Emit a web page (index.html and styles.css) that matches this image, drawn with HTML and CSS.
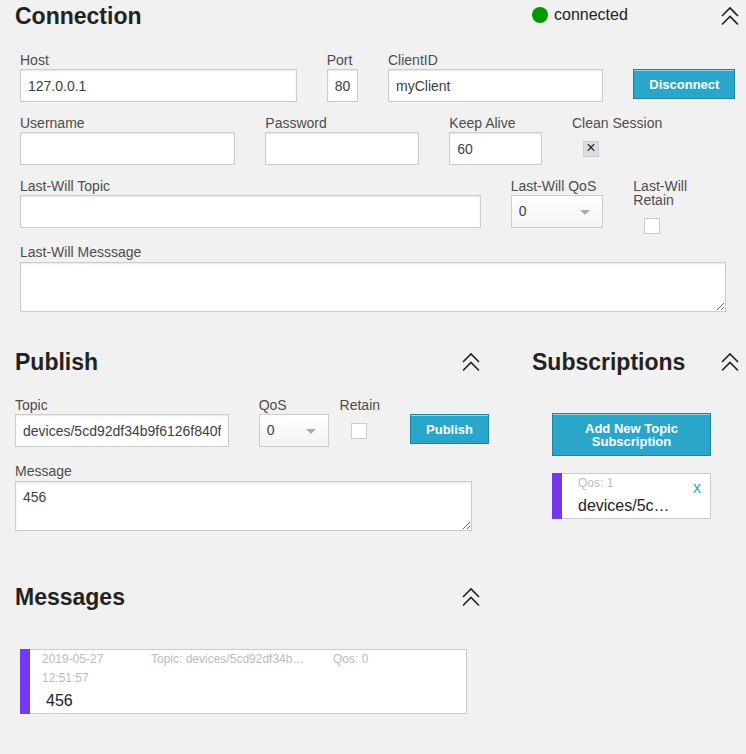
FILE: index.html
```html
<!DOCTYPE html>
<html lang="en">
<head>
<meta charset="utf-8">
<meta name="viewport" content="width=device-width, initial-scale=1">
<title>Websocket client</title>
<link rel="stylesheet" href="styles.css">
</head>
<body>
<svg class="sprite" aria-hidden="true">
  <symbol id="chevrons" viewBox="0 0 18 20"><path d="M1 10 9 2l8 8M1 18.500l8-8 8 8"/></symbol>
</svg>
<main class="page">
  <section class="connection">
    <header class="columns">
      <h3>Connection</h3>
      <div class="bar">
        <span class="status"><i class="dot"></i>connected</span>
        <button class="toggle" type="button" aria-label="Collapse connection"><svg><use href="#chevrons"/></svg></button>
      </div>
    </header>
    <form class="fields">
      <div class="field span-5"><label for="host">Host</label><input id="host" type="text" value="127.0.0.1"></div>
      <div class="field span-1"><label for="port">Port</label><input id="port" type="text" value="80"></div>
      <div class="field span-4"><label for="client">ClientID</label><input id="client" type="text" value="myClient"></div>
      <div class="action span-2"><button class="button" type="button">Disconnect</button></div>

      <div class="field span-4"><label for="user">Username</label><input id="user" type="text"></div>
      <div class="field span-3"><label for="password">Password</label><input id="password" type="password"></div>
      <div class="field span-2"><label for="keepalive">Keep Alive</label><input id="keepalive" type="text" value="60"></div>
      <div class="field span-3"><label for="clean">Clean Session</label><input id="clean" type="checkbox" checked></div>

      <div class="field span-8"><label for="will-topic">Last-Will Topic</label><input id="will-topic" type="text"></div>
      <div class="field span-2"><label for="will-qos">Last-Will QoS</label>
        <span class="select"><select id="will-qos"><option>0</option><option>1</option><option>2</option></select></span></div>
      <div class="field span-2"><label for="will-retain">Last-Will Retain</label><input id="will-retain" type="checkbox"></div>

      <div class="field span-12"><label for="will-message">Last-Will Messsage</label><textarea id="will-message"></textarea></div>
    </form>
  </section>

  <div class="columns">
    <div class="left">
      <section>
        <header class="bar">
          <h3>Publish</h3>
          <button class="toggle" type="button" aria-label="Collapse publish"><svg><use href="#chevrons"/></svg></button>
        </header>
        <form class="publish">
          <div class="publish-row">
            <div class="field"><label for="topic">Topic</label><input id="topic" type="text" value="devices/5cd92df34b9f6126f840f"></div>
            <div class="field"><label for="qos">QoS</label>
              <span class="select"><select id="qos"><option>0</option><option>1</option><option>2</option></select></span></div>
            <div class="field"><label for="retain">Retain</label><input id="retain" type="checkbox"></div>
            <div class="action"><button class="button" type="button">Publish</button></div>
          </div>
          <div class="field message-field"><label for="message">Message</label><textarea id="message">456</textarea></div>
        </form>
      </section>
      <section class="messages">
        <header class="bar">
          <h3>Messages</h3>
          <button class="toggle" type="button" aria-label="Collapse messages"><svg><use href="#chevrons"/></svg></button>
        </header>
        <article class="card message">
          <div class="meta">
            <span>2019-05-27 12:51:57</span>
            <span>Topic: devices/5cd92df34b…</span>
            <span>Qos: 0</span>
          </div>
          <p class="payload">456</p>
        </article>
      </section>
    </div>
    <section>
      <header class="bar">
        <h3>Subscriptions</h3>
        <button class="toggle" type="button" aria-label="Collapse subscriptions"><svg><use href="#chevrons"/></svg></button>
      </header>
      <div class="subscriptions">
        <button class="button wide" type="button">Add New Topic Subscription</button>
        <article class="card subscription">
          <div>
            <p class="qos">Qos: 1</p>
            <p class="topic">devices/5c…</p>
          </div>
          <a class="remove" href="#">x</a>
        </article>
      </div>
    </section>
  </div>
</main>
</body>
</html>
```
FILE: styles.css
```css
* { box-sizing: border-box; }

body {
  margin: 0;
  background: #f1f1f1;
  color: #222;
  font: 16px/24px "Liberation Sans", Arial, sans-serif;
}

h3, p { margin: 0; }
h3 { font-size: 23px; line-height: 32px; }

.sprite { display: none; }

.page { padding: 0 7px 40px 15px; }

.columns {
  display: grid;
  grid-template-columns: minmax(0, 465fr) minmax(0, 207fr);
  column-gap: 52px;
}

.bar {
  display: flex;
  align-items: center;
  justify-content: space-between;
  height: 32px;
}

.status { display: flex; align-items: center; gap: 6px; padding-bottom: 3px; }
.dot { width: 16px; height: 16px; border-radius: 50%; background: #009900; }

.toggle { padding: 0; border: 0; background: none; cursor: pointer; }
.toggle svg {
  display: block;
  width: 18px;
  height: 20px;
  fill: none;
  stroke: #222;
  stroke-width: 1.6;
}

.connection { margin-bottom: 34px; }

.fields {
  display: grid;
  grid-template-columns: repeat(12, minmax(0, 1fr));
  gap: 11px 30px;
  margin: 21px 13px 0 5px;
}

.span-1 { grid-column: span 1; }
.span-2 { grid-column: span 2; }
.span-3 { grid-column: span 3; }
.span-4 { grid-column: span 4; }
.span-5 { grid-column: span 5; }
.span-8 { grid-column: span 8; }
.span-12 { grid-column: span 12; }

.field {
  display: flex;
  flex-direction: column;
  min-height: 52px;
}

label {
  margin-bottom: 2px;
  color: #4d4d4d;
  font-size: 14px;
  line-height: 14px;
}

input, select, textarea {
  width: 100%;
  margin: 0;
  border: 1px solid #ccc;
  border-radius: 0;
  background: #fff;
  color: #404040;
  font: 14px/17px "Liberation Sans", Arial, sans-serif;
}

input[type="text"], input[type="password"], textarea {
  padding: 7px;
  box-shadow: inset 0 1px 2px rgba(0, 0, 0, 0.1);
}

input[type="text"], input[type="password"] { height: 33px; }
textarea { display: block; height: 50px; margin-top: 1px; resize: vertical; }

.select { position: relative; display: block; }
.select::after {
  content: "";
  position: absolute;
  top: 15px;
  right: 13px;
  border: 5px solid transparent;
  border-top-color: #aaa;
  border-bottom-width: 0;
  pointer-events: none;
}
select {
  display: block;
  height: 33px;
  padding: 0 7px;
  appearance: none;
  background: linear-gradient(#fff, #f3f3f3);
}

input[type="checkbox"] {
  display: grid;
  place-items: center;
  width: 16px;
  height: 16px;
  margin: 9px 0 0 11px;
  appearance: none;
}
input[type="checkbox"]:checked { background: #ddd; }
input[type="checkbox"]:checked::before {
  content: "×";
  color: #222;
  font-size: 16px;
  line-height: 12px;
  height: 16px;
}

.action { padding-top: 16px; }

.button {
  padding: 8px 15px 7px;
  border: 1px solid #1e83a1;
  background: #2ba6cb;
  box-shadow: inset 0 1px 0 rgba(255, 255, 255, 0.5);
  color: #fff;
  font: bold 13px/13px "Liberation Sans", Arial, sans-serif;
  text-align: center;
  cursor: pointer;
}
.button.wide { width: 100%; }

.publish { margin-top: 20px; }
.publish-row {
  display: grid;
  grid-template-columns: minmax(0, 244fr) minmax(0, 81fr) auto auto;
  margin-right: -9px;
  margin-bottom: 11px;
}
.publish-row .field:nth-child(1) { margin-right: 30px; }
.publish-row .field:nth-child(2) { margin-right: 11px; }
.publish-row .field:nth-child(3) { min-height: 55px; margin-right: 30px; }
.message-field { margin-right: 8px; }

.messages { margin-top: 50px; }

.card {
  position: relative;
  border: 1px solid #ccc;
  background: #fff;
}
.card::before {
  content: "";
  position: absolute;
  inset: -1px auto -1px -1px;
  width: 10px;
  background: #7338f0;
}

.meta {
  display: grid;
  grid-template-columns: 109fr 182fr 133fr;
  color: #bbb;
  font-size: 12px;
  line-height: 19px;
}
.meta span { padding-right: 15px; }

.message { margin: 36px 13px 0 5px; padding: 0 0 0 21px; }
.payload { padding: 1px 0 0 4px; }

.subscriptions { padding: 35px 28px 0 20px; }
.subscription {
  display: flex;
  justify-content: space-between;
  margin-top: 17px;
  padding: 0 9px 0 25px;
}
.qos { color: #bbb; font-size: 12px; line-height: 19px; }
.topic { padding-top: 1px; color: #222; }
.remove { padding-top: 2px; color: #2ba6cb; text-decoration: none; }
```
